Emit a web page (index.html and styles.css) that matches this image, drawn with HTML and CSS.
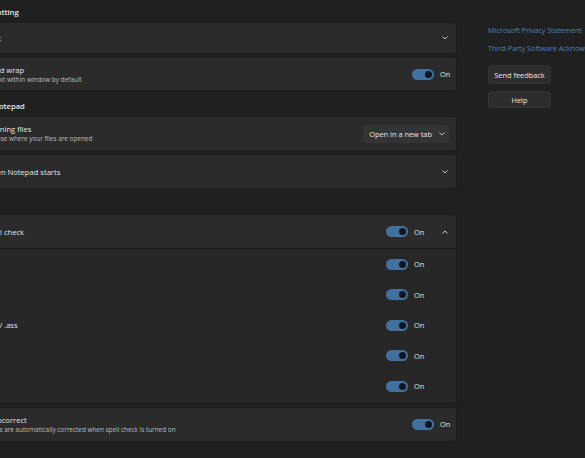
FILE: index.html
```html
<!DOCTYPE html>
<html lang="en">

<head>
    <meta charset="UTF-8">
    <meta name="viewport" content="width=device-width, initial-scale=1.0">
    <title>Notepad Settings</title>
    <link rel="stylesheet" href="styles.css">
</head>

<body>
    <div class="page">
        <!-- Settings column -->
        <main class="settings">
            <h2 class="section-title">Text Formatting</h2>

            <div class="card card-short">
                <div class="card-text">
                    <div class="card-title">Font</div>
                </div>
                <div class="chevron-slot">
                    <svg class="chevron" viewBox="0 0 6 4"><polyline points="0.5,0.5 3,3 5.5,0.5" /></svg>
                </div>
            </div>

            <div class="card card-mid">
                <div class="card-text">
                    <div class="card-title">Word wrap</div>
                    <div class="card-desc">Fit text within window by default</div>
                </div>
                <div class="toggle-wrap">
                    <span class="toggle on"></span>
                    <span class="toggle-label">On</span>
                </div>
            </div>

            <h2 class="section-title">Opening Notepad</h2>

            <div class="card">
                <div class="card-text">
                    <div class="card-title">Opening files</div>
                    <div class="card-desc">Choose where your files are opened</div>
                </div>
                <div class="dropdown">
                    <span>Open in a new tab</span>
                    <svg class="chevron" viewBox="0 0 6 4"><polyline points="0.5,0.5 3,3 5.5,0.5" /></svg>
                </div>
            </div>

            <div class="card">
                <div class="card-text">
                    <div class="card-title">When Notepad starts</div>
                </div>
                <div class="chevron-slot">
                    <svg class="chevron" viewBox="0 0 6 4"><polyline points="0.5,0.5 3,3 5.5,0.5" /></svg>
                </div>
            </div>

            <h2 class="section-title">Spelling</h2>

            <div class="expander">
                <div class="card expander-head">
                    <div class="card-text">
                        <div class="card-title">Spell check</div>
                    </div>
                    <div class="toggle-wrap">
                        <span class="toggle on"></span>
                        <span class="toggle-label">On</span>
                    </div>
                    <div class="chevron-slot">
                        <svg class="chevron" viewBox="0 0 6 4"><polyline points="0.5,3.5 3,1 5.5,3.5" /></svg>
                    </div>
                </div>
                <div class="expander-body">
                    <div class="sub-row">
                        <span class="sub-label">.txt</span>
                        <div class="toggle-wrap"><span class="toggle on"></span><span class="toggle-label">On</span></div>
                    </div>
                    <div class="sub-row">
                        <span class="sub-label">.md</span>
                        <div class="toggle-wrap"><span class="toggle on"></span><span class="toggle-label">On</span></div>
                    </div>
                    <div class="sub-row">
                        <span class="sub-label">.srt / .ass</span>
                        <div class="toggle-wrap"><span class="toggle on"></span><span class="toggle-label">On</span></div>
                    </div>
                    <div class="sub-row">
                        <span class="sub-label">.lrc</span>
                        <div class="toggle-wrap"><span class="toggle on"></span><span class="toggle-label">On</span></div>
                    </div>
                    <div class="sub-row">
                        <span class="sub-label">.log</span>
                        <div class="toggle-wrap"><span class="toggle on"></span><span class="toggle-label">On</span></div>
                    </div>
                </div>
            </div>

            <div class="card">
                <div class="card-text">
                    <div class="card-title">Autocorrect</div>
                    <div class="card-desc">Typos are automatically corrected when spell check is turned on</div>
                </div>
                <div class="toggle-wrap">
                    <span class="toggle on"></span>
                    <span class="toggle-label">On</span>
                </div>
            </div>
        </main>

        <!-- About column -->
        <aside class="about">
            <a class="about-link" href="#">Microsoft Privacy Statement</a>
            <a class="about-link" href="#">Third-Party Software Acknowledgements</a>
            <button class="btn btn-feedback">Send feedback</button>
            <button class="btn btn-help">Help</button>
        </aside>
    </div>
</body>

</html>
```

FILE: styles.css
```css
/* Base */
html,
body {
    margin: 0;
    height: 100%;
    overflow: hidden;
}

body {
    font-family: 'Open Sans', 'Noto Sans', sans-serif;
    background-color: #202020;
    color: #e4e4e4;
    font-size: 7.2px;
}

.page {
    display: flex;
    align-items: flex-start;
}

/* Settings column */
.settings {
    flex: 0 0 497px;
    margin-left: -40px;
}

.section-title {
    margin: 0;
    height: 22px;
    box-sizing: border-box;
    padding: 3px 0 0 0;
    line-height: 18px;
    font-size: 7.6px;
    font-weight: 600;
    color: #e8e8e8;
    white-space: nowrap;
}

.card {
    display: flex;
    align-items: center;
    height: 35px;
    box-sizing: border-box;
    padding: 0 5px 0 24px;
    margin-bottom: 3px;
    background-color: #2b2b2b;
    border: 1px solid #1c1c1c;
    border-radius: 3px;
}

.card-short {
    height: 32px;
}

.card-mid {
    height: 34px;
}

.card-text {
    flex: 1;
    min-width: 0;
    padding-top: 1px;
    white-space: nowrap;
}

.card-title {
    font-size: 7.6px;
    line-height: 9px;
    color: #e6e6e6;
}

.card-desc {
    font-size: 6.4px;
    line-height: 9px;
    color: #bdbdbd;
}

/* Chevrons */
.chevron-slot {
    width: 26px;
    display: flex;
    justify-content: flex-end;
    padding-right: 3px;
    box-sizing: border-box;
}

.chevron {
    width: 6px;
    height: 4px;
    fill: none;
    stroke: #c4c4c4;
    stroke-width: 1;
}

/* Toggle */
.toggle-wrap {
    display: flex;
    align-items: center;
    gap: 6px;
}

.toggle {
    position: relative;
    width: 22px;
    height: 11px;
    border-radius: 6px;
    background-color: #42709f;
}

.toggle::after {
    content: "";
    position: absolute;
    top: 2px;
    right: 2px;
    width: 7px;
    height: 7px;
    border-radius: 50%;
    background-color: #0c1724;
}

.toggle-label {
    width: 11px;
    font-size: 7.4px;
    color: #e2e2e2;
}

/* Dropdown */
.dropdown {
    display: flex;
    align-items: center;
    gap: 7px;
    height: 18px;
    box-sizing: border-box;
    padding: 0 4px 0 6px;
    margin-right: 2px;
    background-color: #343434;
    border-radius: 3px;
    font-size: 7.4px;
    color: #e6e6e6;
    white-space: nowrap;
}

/* Expander */
.expander {
    margin-bottom: 3px;
}

.expander-head {
    margin-bottom: 0;
    border-bottom-left-radius: 0;
    border-bottom-right-radius: 0;
}

.expander-body {
    padding-bottom: 1px;
    background-color: #272727;
    border: 1px solid #1c1c1c;
    border-top: none;
    border-radius: 0 0 3px 3px;
}

.sub-row {
    display: flex;
    align-items: center;
    height: 30.5px;
    padding: 0 31px 0 25px;
}

.sub-label {
    flex: 1;
    font-size: 7.6px;
    color: #e6e6e6;
    white-space: nowrap;
}

/* About column */
.about {
    margin-left: 31px;
    padding-top: 24px;
    display: flex;
    flex-direction: column;
    align-items: flex-start;
    white-space: nowrap;
}

.about-link {
    line-height: 12px;
    font-size: 7.2px;
    color: #4c82ba;
    text-decoration: none;
    margin-bottom: 6px;
}

.btn {
    width: 63px;
    padding: 0;
    font-family: inherit;
    font-size: 7.4px;
    color: #e8e8e8;
    background-color: #2d2d2d;
    border: 1px solid #343434;
    border-radius: 3px;
}

.btn-feedback {
    height: 19px;
    margin-top: 5px;
}

.btn-help {
    height: 17px;
    margin-top: 7px;
}
```
